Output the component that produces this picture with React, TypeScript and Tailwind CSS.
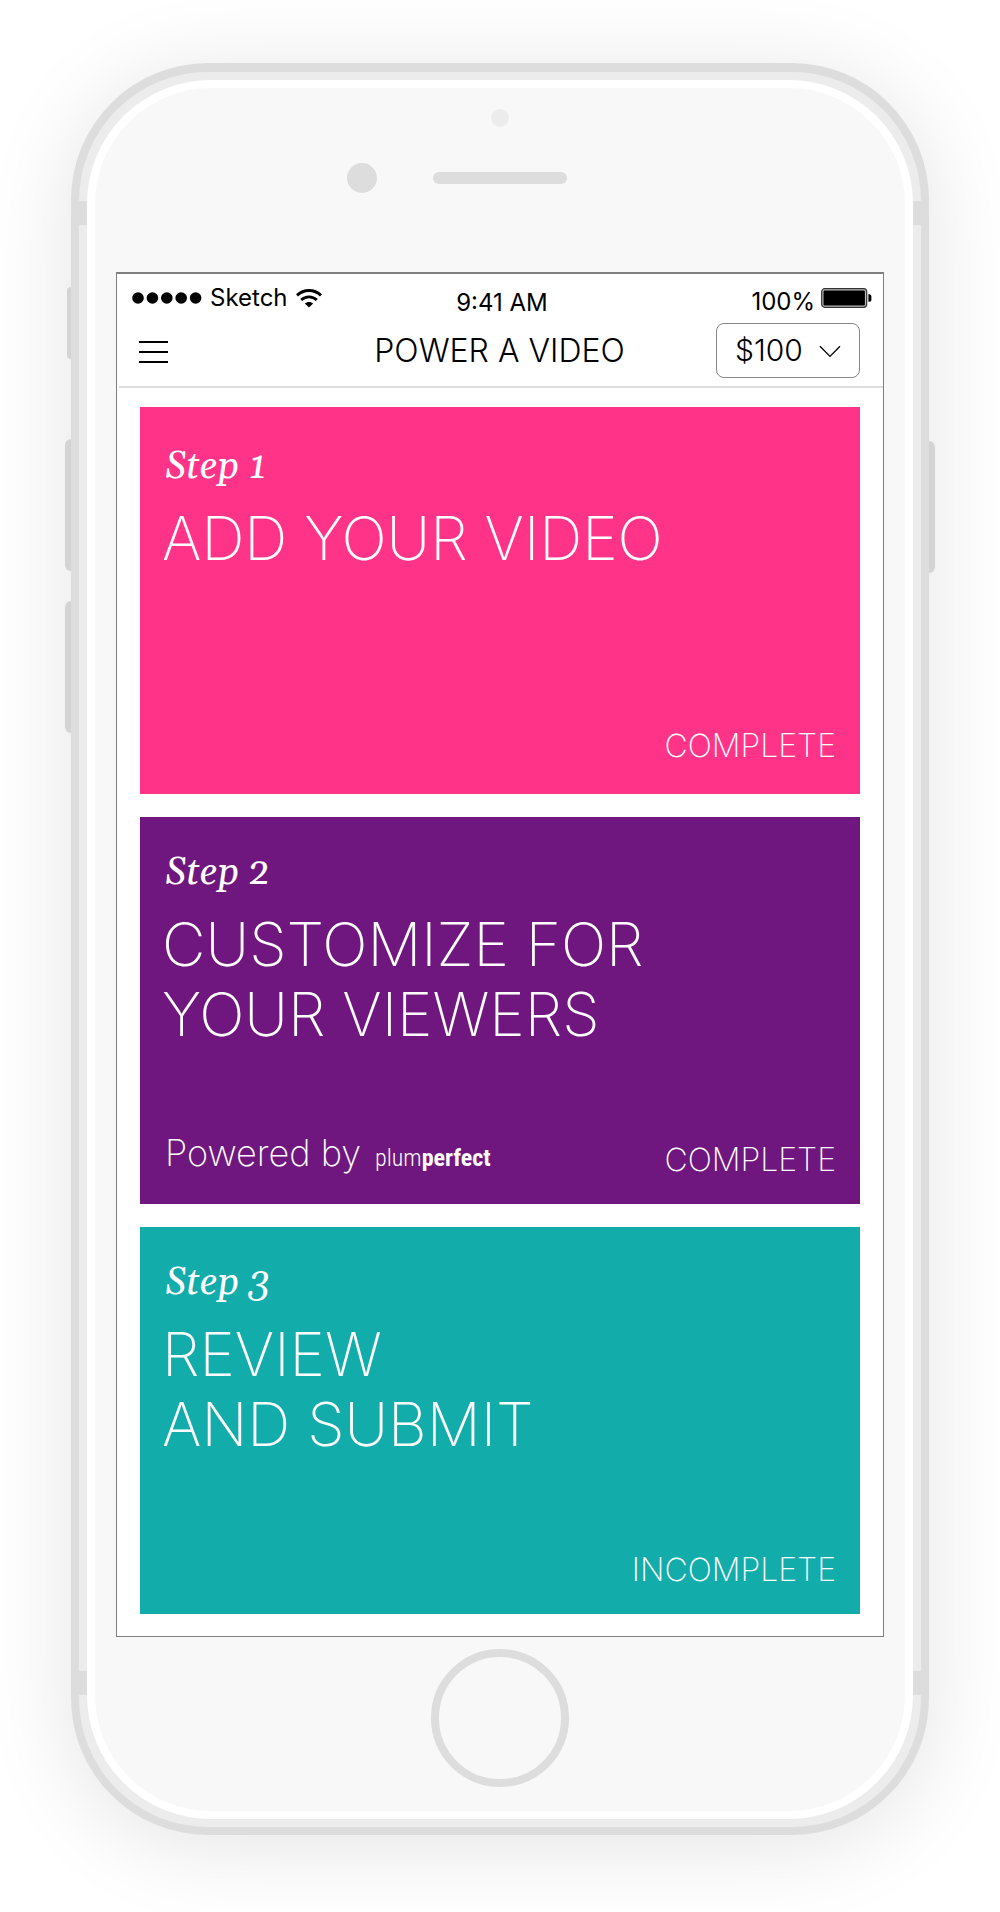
type Step = {
  id: string;
  lines: string[];
  status: string;
  colors: string;
  padding: string;
  poweredBy?: boolean;
};

const steps: Step[] = [
  {
    id: "Step 1",
    lines: ["ADD YOUR VIDEO"],
    status: "COMPLETE",
    colors: "bg-[#ff3488]",
    padding: "pt-10 pb-7",
  },
  {
    id: "Step 2",
    lines: ["CUSTOMIZE FOR", "YOUR VIEWERS"],
    status: "COMPLETE",
    colors: "bg-[#70177f]",
    padding: "pt-9 pb-6",
    poweredBy: true,
  },
  {
    id: "Step 3",
    lines: ["REVIEW", "AND SUBMIT"],
    status: "INCOMPLETE",
    colors: "bg-[#12acab]",
    padding: "pt-9 pb-6",
  },
];

function WifiIcon() {
  return (
    <svg width="26" height="19" viewBox="0 0 26 19" fill="none" stroke="#000" aria-hidden="true">
      <path d="M1 6.4C7.8 -0.2 18.2 -0.2 25 6.4" strokeWidth="2.9" />
      <path d="M5.2 11C9.6 6.8 16.4 6.8 20.8 11" strokeWidth="2.9" />
      <path d="M13 18.6L8.8 14.6C11.2 12.4 14.8 12.4 17.2 14.6Z" fill="#000" stroke="none" />
    </svg>
  );
}

function BatteryIcon() {
  return (
    <svg width="51" height="20" viewBox="0 0 51 20" aria-hidden="true">
      <rect x="0.7" y="0.7" width="45" height="18.6" rx="3" fill="#bbb" stroke="#333" strokeWidth="1.2" />
      <rect x="2.5" y="2.5" width="41.4" height="15" rx="1.2" fill="#000" />
      <path d="M47.4 6.2H48.6Q50.4 6.6 50.4 8V12Q50.4 13.4 48.6 13.8H47.4Z" fill="#000" />
    </svg>
  );
}

function StatusBar() {
  return (
    <div className="grid h-12 grid-cols-3 items-center pt-[2px] pr-[11px] pl-[15px] text-2xl leading-none text-black">
      <div className="flex items-center gap-2 pb-[2px] whitespace-nowrap">
        <svg width="70" height="12" viewBox="0 0 70 12" aria-hidden="true">
          {[6, 20.4, 34.8, 49.2, 63.6].map((cx) => (
            <circle key={cx} cx={cx} cy="6" r="5.8" />
          ))}
        </svg>
        <span>Sketch</span>
        <WifiIcon />
      </div>
      <div className="pt-2 text-center">9:41 AM</div>
      <div className="flex items-center justify-end gap-[6px] pb-[2px]">
        <span className="pt-2">100%</span>
        <BatteryIcon />
      </div>
    </div>
  );
}

function NavBar() {
  return (
    <header className="ml-[2px] grid grid-cols-[1fr_auto_1fr] items-center border-b-2 border-[#dedede] pr-[23px] pb-2 pl-5 text-black">
      <button type="button" aria-label="Menu" className="flex h-14 w-[29px] flex-col justify-center gap-2 pt-1">
        <span className="h-[2px] w-full bg-black" />
        <span className="h-[2px] w-full bg-black" />
        <span className="h-[2px] w-full bg-black" />
      </button>
      <h1 className="pt-[2px] text-[32px] leading-10 font-light">POWER A VIDEO</h1>
      <div className="relative w-36 justify-self-end">
        <select
          aria-label="Amount"
          className="block h-[55px] w-full appearance-none rounded-lg border border-[#888] bg-white pl-[18px] text-3xl leading-10 font-light"
        >
          <option>$100</option>
        </select>
        <svg
          className="pointer-events-none absolute top-[22px] right-[19px]"
          width="22"
          height="13"
          viewBox="0 0 22 13"
          fill="none"
          stroke="#000"
          strokeWidth="1.3"
          aria-hidden="true"
        >
          <path d="M1 1.2L11 11.4L21 1.2" />
        </svg>
      </div>
    </header>
  );
}

function StepCard({ step }: { step: Step }) {
  return (
    <section className={`flex min-h-[387px] flex-col justify-between pr-6 pl-[22px] text-white ${step.colors} ${step.padding}`}>
      <div>
        <p className="pl-[3px] font-[Gelasio,Georgia,serif] text-[38px] leading-10 italic">{step.id}</p>
        <h2 className="mt-4 text-6xl leading-[70px] font-[150]">
          {step.lines.map((line) => (
            <span key={line} className="block">
              {line}
            </span>
          ))}
        </h2>
      </div>
      <div className="flex items-end justify-between">
        {step.poweredBy ? (
          <p className="flex items-baseline gap-[14px] pb-[2px] pl-[3px] text-4xl leading-10 font-[250]">
            Powered by
            <span className="font-['Roboto_Condensed',Roboto,sans-serif] text-2xl leading-10 font-light">
              plum<b className="font-bold">perfect</b>
            </span>
          </p>
        ) : (
          <span />
        )}
        <p className="text-[32px] leading-10 font-[250]">{step.status}</p>
      </div>
    </section>
  );
}

function AntennaBand({ place }: { place: string }) {
  return <span className={`absolute h-6 w-2 bg-[#ddd] ${place}`} />;
}

function SideButton({ place }: { place: string }) {
  return <span className={`absolute bg-[#d4d4d4] ${place}`} />;
}

export default function App() {
  return (
    <main className="overflow-hidden bg-white px-[71px] pt-[63px] pb-[77px] font-[Inter,sans-serif]">
      <div className="relative">
        <div className="relative rounded-[137px] bg-[#ddd] p-2 pt-[9px] shadow-[0_10px_90px_rgba(0,0,0,0.11)]">
          <SideButton place="top-[224px] -left-1 h-[72px] w-1 rounded-l" />
          <SideButton place="top-[376px] -left-[6px] h-[132px] w-[6px] rounded-l-md" />
          <SideButton place="top-[538px] -left-[6px] h-[132px] w-[6px] rounded-l-md" />
          <SideButton place="top-[378px] -right-[6px] h-[132px] w-[6px] rounded-r-md" />
          <div className="relative rounded-[129px] bg-[#ececec] p-2">
            <AntennaBand place="top-[129px] left-0" />
            <AntennaBand place="top-[129px] right-0" />
            <AntennaBand place="bottom-[132px] left-0" />
            <AntennaBand place="bottom-[132px] right-0" />
            <div className="relative rounded-[124px] border-8 border-white bg-[#f8f8f8] px-[21px]">
              <div className="flex flex-col items-center pt-[21px] pb-[79px]">
                <span className="size-[18px] rounded-full bg-[#ececec]" />
                <div className="mt-9 grid w-full grid-cols-[1fr_auto_1fr] items-center">
                  <span className="mr-14 size-[30px] justify-self-end rounded-full bg-[#ddd]" />
                  <span className="h-3 w-[134px] rounded-full bg-[#ddd]" />
                  <span />
                </div>
              </div>
              <div className="border border-t-2 border-[#808080] bg-white">
                <StatusBar />
                <NavBar />
                <div className="flex flex-col gap-[23px] pt-[19px] pr-[23px] pb-[22px] pl-[23px]">
                  {steps.map((step) => (
                    <StepCard key={step.id} step={step} />
                  ))}
                </div>
              </div>
              <div className="flex justify-center pt-3 pb-6">
                <button
                  type="button"
                  aria-label="Home"
                  className="size-[138px] rounded-full border-8 border-[#ddd]"
                />
              </div>
            </div>
          </div>
        </div>
      </div>
    </main>
  );
}
